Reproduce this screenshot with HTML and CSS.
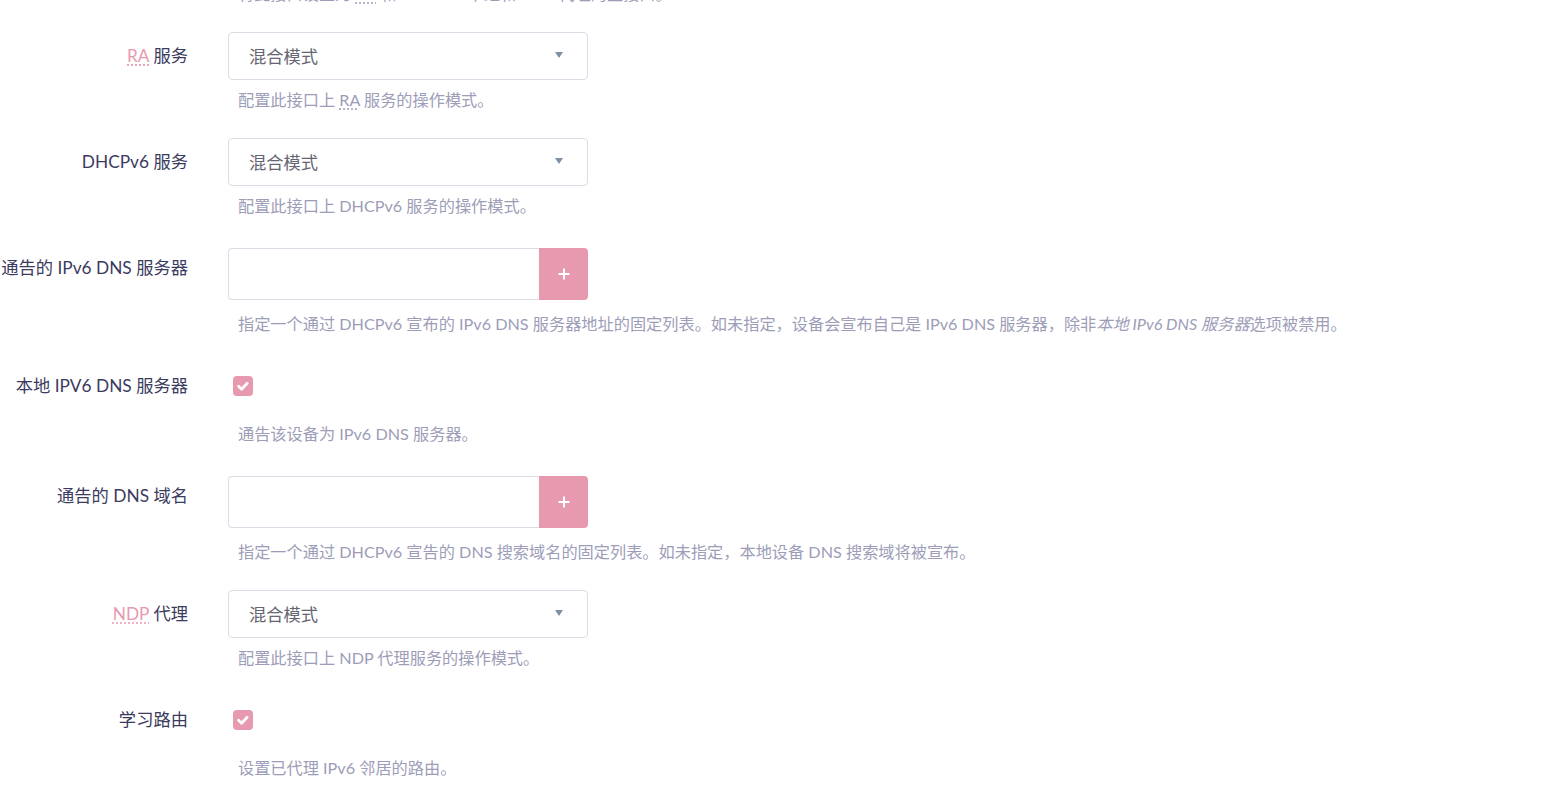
FILE: index.html
```html
<!DOCTYPE html>
<html lang="zh-CN">
<head>
<meta charset="utf-8">
<title>IPv6 设置</title>
<link rel="stylesheet" href="styles.css">
</head>
<body>
<div class="form">
  <div class="row tail">
    <div class="label"></div>
    <div class="field">
      <div class="desc">将此接口设置为 <abbr class="ab-desc">RA</abbr> 和 DHCPv6 中继和 NDP 代理的主接口。</div>
    </div>
  </div>

  <div class="row row-select">
    <div class="label"><abbr class="ab">RA</abbr> 服务</div>
    <div class="field">
      <div class="select"><span>混合模式</span><span class="caret"></span></div>
      <div class="desc">配置此接口上 <abbr class="ab-desc">RA</abbr> 服务的操作模式。</div>
    </div>
  </div>

  <div class="row row-select">
    <div class="label">DHCPv6 服务</div>
    <div class="field">
      <div class="select"><span>混合模式</span><span class="caret"></span></div>
      <div class="desc">配置此接口上 DHCPv6 服务的操作模式。</div>
    </div>
  </div>

  <div class="row row-list">
    <div class="label">通告的 IPv6 DNS 服务器</div>
    <div class="field">
      <div class="dynlist"><div class="dyn-input"></div><div class="dyn-btn"><svg viewBox="0 0 14 14" width="14" height="14"><path d="M7 1.5v11M1.5 7h11" stroke="#fff" stroke-width="2"/></svg></div></div>
      <div class="desc">指定一个通过 DHCPv6 宣布的 IPv6 DNS 服务器地址的固定列表。如未指定，设备会宣布自己是 IPv6 DNS 服务器，除非<em>本地 IPv6 DNS 服务器</em>选项被禁用。</div>
    </div>
  </div>

  <div class="row row-check">
    <div class="label">本地 IPV6 DNS 服务器</div>
    <div class="field">
      <div class="check"><svg viewBox="0 0 20 20" width="20" height="20"><path d="M5.6 10.3l3 2.9 5.6-5.9" fill="none" stroke="#fff" stroke-width="2.8" stroke-linecap="round" stroke-linejoin="round"/></svg></div>
      <div class="desc">通告该设备为 IPv6 DNS 服务器。</div>
    </div>
  </div>

  <div class="row row-list">
    <div class="label">通告的 DNS 域名</div>
    <div class="field">
      <div class="dynlist"><div class="dyn-input"></div><div class="dyn-btn"><svg viewBox="0 0 14 14" width="14" height="14"><path d="M7 1.5v11M1.5 7h11" stroke="#fff" stroke-width="2"/></svg></div></div>
      <div class="desc">指定一个通过 DHCPv6 宣告的 DNS 搜索域名的固定列表。如未指定，本地设备 DNS 搜索域将被宣布。</div>
    </div>
  </div>

  <div class="row row-select">
    <div class="label"><abbr class="ab">NDP</abbr> 代理</div>
    <div class="field">
      <div class="select"><span>混合模式</span><span class="caret"></span></div>
      <div class="desc">配置此接口上 NDP 代理服务的操作模式。</div>
    </div>
  </div>

  <div class="row row-check">
    <div class="label">学习路由</div>
    <div class="field">
      <div class="check"><svg viewBox="0 0 20 20" width="20" height="20"><path d="M5.6 10.3l3 2.9 5.6-5.9" fill="none" stroke="#fff" stroke-width="2.8" stroke-linecap="round" stroke-linejoin="round"/></svg></div>
      <div class="desc">设置已代理 IPv6 邻居的路由。</div>
    </div>
  </div>
</div>
</body>
</html>
```

FILE: styles.css
```css
html, body {
  margin: 0;
  padding: 0;
  background: #ffffff;
}

body {
  font-family: "Lato", "Noto Sans CJK SC", sans-serif;
  color: #3c3c5e;
  overflow: hidden;
  text-spacing-trim: space-all;
}

.form {
  display: flex;
  flex-direction: column;
}

.row {
  display: grid;
  grid-template-columns: 188px 360px;
  column-gap: 40px;
  margin-bottom: 27px;
}

.tail {
  margin-top: -17px;
}

.label {
  text-align: right;
  font-size: 17.3px;
  line-height: 47px;
  color: #3b3b60;
  white-space: nowrap;
}

.ab {
  color: #e799b0;
  text-decoration: underline dotted #e799b0;
  text-underline-offset: 3px;
}

.ab-desc {
  text-decoration: underline dotted #a3a3bb;
  text-underline-offset: 3px;
}

.field {
  display: flex;
  flex-direction: column;
}

.desc {
  font-size: 16.2px;
  line-height: 22px;
  color: #9d9db8;
  padding-left: 10px;
  white-space: nowrap;
}

.desc em {
  font-style: italic;
}

.select {
  height: 48px;
  box-sizing: border-box;
  border: 1px solid #dcdce6;
  border-radius: 4px;
  display: flex;
  align-items: center;
  justify-content: space-between;
  padding: 0 24px 2px 20px;
  font-size: 17.3px;
  color: #666672;
}

.caret {
  width: 0;
  height: 0;
  border-left: 4px solid transparent;
  border-right: 4px solid transparent;
  border-top: 6px solid #7f90a4;
}

.row-select .desc {
  margin-top: 9px;
}

.dynlist {
  margin-top: 4px;
  height: 52px;
  display: flex;
}

.dyn-input {
  flex: 1;
  box-sizing: border-box;
  border: 1px solid #dcdce6;
  border-right: none;
  border-radius: 4px 0 0 4px;
}

.dyn-btn {
  width: 49px;
  background: #e799b0;
  border-radius: 0 4px 4px 0;
  display: flex;
  align-items: center;
  justify-content: center;
}

.dyn-btn svg {
  display: block;
}

.row-list .desc {
  margin-top: 13px;
}

.check {
  margin-top: 14px;
  margin-left: 5px;
  width: 20px;
  height: 20px;
  border-radius: 4px;
  background: #e799b0;
}

.check svg {
  display: block;
}

.row-check .desc {
  margin-top: 27px;
}
```
